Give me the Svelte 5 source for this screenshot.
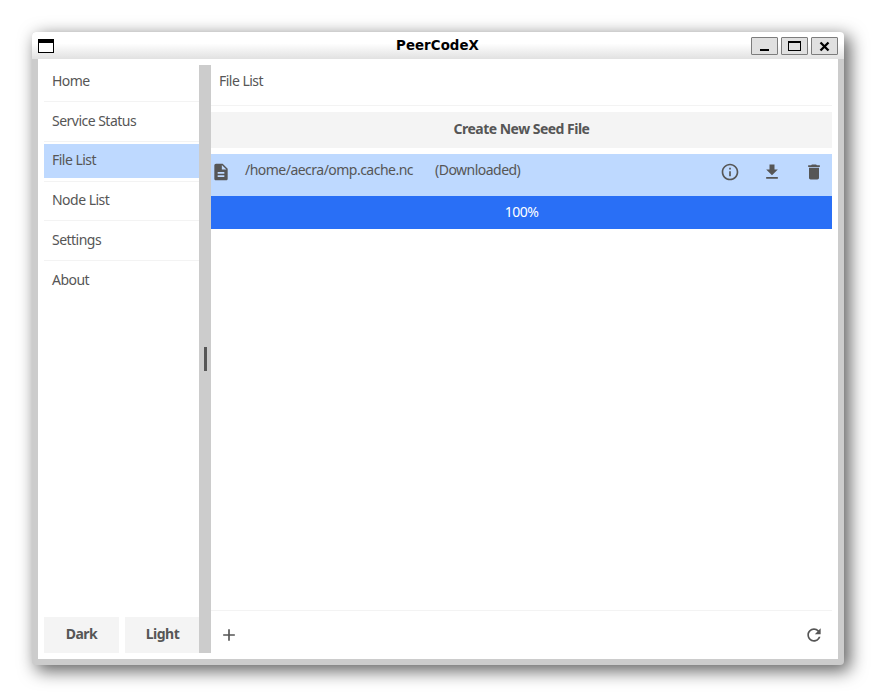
<script>
  const items = ['Home', 'Service Status', 'File List', 'Node List', 'Settings', 'About'];
  let selected = $state('File List');
</script>

<div class="desktop">
  <div class="window">
    <header>
      <svg class="app" width="16" height="14" viewBox="0 0 16 14" shape-rendering="crispEdges"><path fill="#000" d="M0 0h16v14H0z" /><path fill="#fff" d="M1 4h14v9H1z" /></svg>
      <h1>PeerCodeX</h1>
      <div class="controls">
        <button aria-label="Minimize"><svg width="25" height="16" shape-rendering="crispEdges"><path d="M8 11h9v2H8z" /></svg></button>
        <button aria-label="Maximize"><svg width="25" height="16" shape-rendering="crispEdges"><path fill-rule="evenodd" d="M6 3h13v10H6zM7 5v7h11V5z" /></svg></button>
        <button aria-label="Close"><svg width="25" height="16"><path d="M8.500 4.500l8 8M16.500 4.500l-8 8" stroke="#000" stroke-width="2.300" /></svg></button>
      </div>
    </header>
    <main>
      <aside>
        <nav>
          {#each items as item}
            <button class="item" class:active={item === selected} onclick={() => (selected = item)}><span>{item}</span></button>
          {/each}
        </nav>
        <div class="themes"><button>Dark</button><button>Light</button></div>
      </aside>
      <div class="splitter"><i></i></div>
      <section>
        <h2>File List</h2>
        <button class="create">Create New Seed File</button>
        <div class="file">
          <svg class="icon" viewBox="0 0 24 24"><path d="M14 2H6c-1.100 0-1.990.9-1.990 2L4 20c0 1.100.89 2 1.990 2H18c1.100 0 2-.9 2-2V8l-6-6zm2 16H8v-2h8v2zm0-4H8v-2h8v2zm-3-5V3.500L18.500 9H13z" /></svg>
          <span class="path">/home/aecra/omp.cache.nc</span>
          <span class="status">(Downloaded)</span>
          <div class="actions">
            <svg class="icon" viewBox="0 0 24 24"><path d="M11 17h2v-6h-2v6zm1-15C6.480 2 2 6.480 2 12s4.480 10 10 10 10-4.480 10-10S17.520 2 12 2zm0 18c-4.410 0-8-3.590-8-8s3.590-8 8-8 8 3.590 8 8-3.590 8-8 8zM11 9h2V7h-2v2z" /></svg>
            <svg class="icon" viewBox="0 0 24 24"><path d="M19 9h-4V3H9v6H5l7 7 7-7zM5 18v2h14v-2H5z" /></svg>
            <svg class="icon" viewBox="0 0 24 24"><path d="M6 19c0 1.100.9 2 2 2h8c1.100 0 2-.9 2-2V7H6v12zM19 4h-3.500l-1-1h-5l-1 1H5v2h14V4z" /></svg>
          </div>
        </div>
        <div class="progress"><span>100%</span></div>
        <div class="space"></div>
        <footer>
          <svg class="icon" viewBox="0 0 24 24"><path d="M19 13h-6v6h-2v-6H5v-2h6V5h2v6h6v2z" /></svg>
          <svg class="icon" viewBox="0 0 24 24"><path d="M17.650 6.350C16.200 4.900 14.210 4 12 4c-4.420 0-7.990 3.580-7.990 8s3.570 8 7.990 8c3.730 0 6.840-2.550 7.730-6h-2.080c-.82 2.330-3.040 4-5.650 4-3.310 0-6-2.690-6-6s2.690-6 6-6c1.660 0 3.140.69 4.220 1.780L13 11h7V4l-2.350 2.350z" /></svg>
        </footer>
      </section>
    </main>
  </div>
</div>

<style>
  .desktop, .desktop * { box-sizing: border-box; }
  .desktop { width: 876px; height: 697px; padding: 32px; background: #fff; overflow: hidden; color: #565656; font: 14px/20px "Noto Sans", sans-serif; letter-spacing: -0.52px; }
  button { border: 0; padding: 0; margin: 0; border-radius: 0; font: inherit; color: inherit; letter-spacing: inherit; background: #f4f4f4; }
  .window { width: 812px; height: 633px; display: flex; flex-direction: column; border-radius: 4px; background: #ccc; box-shadow: 5px 5px 17px 1px rgba(0, 0, 0, .62); }
  header { height: 27px; flex: none; display: flex; align-items: center; padding: 0 6px; border-radius: 4px 4px 0 0; background: linear-gradient(#fff 0%, #fff 42%, #e1e1e1 100%); }
  .app { margin-top: 1px; width: 16px; }
  h1 { flex: 1; margin: 0; padding-left: 70px; text-align: center; color: #000; font: bold 13.330px/20px "DejaVu Sans", sans-serif; letter-spacing: 0.08px; }
  .controls { display: flex; gap: 3px; }
  .controls button { width: 27px; height: 18px; border: 1px solid #7c7c7c; border-radius: 1px; background: #e0e0e0; }
  svg { display: block; flex: none; }
  main { display: flex; flex: 1; margin: 0 6px 6px; padding: 6px; background: #fff; }
  aside { width: 155px; display: flex; flex-direction: column; justify-content: space-between; overflow: hidden; }
  nav { display: flex; flex-direction: column; }
  .item { height: 33.740px; margin-bottom: 6px; text-align: left; padding: 0 8px; background: none; position: relative; }
  .item span { display: block; padding-bottom: 2px; }
  .item:not(:last-child)::after { content: ""; position: absolute; left: 0; right: 0; bottom: -3.500px; height: 1px; background: #f3f3f3; }
  .active { background: #bed9ff; }
  .themes { display: flex; gap: 6px; }
  .themes button { width: 75px; flex: none; height: 36px; font-weight: bold; padding-bottom: 2px; }
  .splitter { width: 12px; background: #ccc; display: grid; place-items: center; }
  .splitter i { width: 3px; height: 24px; background: #565656; margin-left: 1px; }
  section { flex: 1; display: flex; flex-direction: column; }
  h2 { margin: 0 0 6px; height: 41px; padding: 6px 8px; font: inherit; border-bottom: 1px solid #f3f3f3; }
  .create { height: 36px; font-weight: bold; padding-bottom: 2px; margin-bottom: 6px; }
  .file { height: 42px; display: flex; align-items: flex-start; background: #bed9ff; padding-top: 6px; }
  .icon { width: 20px; height: 20px; fill: #565656; }
  .file > .icon, .actions { margin-top: 2px; }
  .path { margin-left: 14px; width: 190px; }
  .actions { margin-left: auto; display: flex; gap: 22px; padding-right: 8px; }
  .progress { height: 33px; background: #296ff6; color: #fff; display: grid; place-items: center; padding-bottom: 2px; }
  .space { flex: 1; }
  footer { height: 43px; border-top: 1px solid #f3f3f3; display: flex; justify-content: space-between; align-items: center; padding: 6px 8px 0; }
</style>
